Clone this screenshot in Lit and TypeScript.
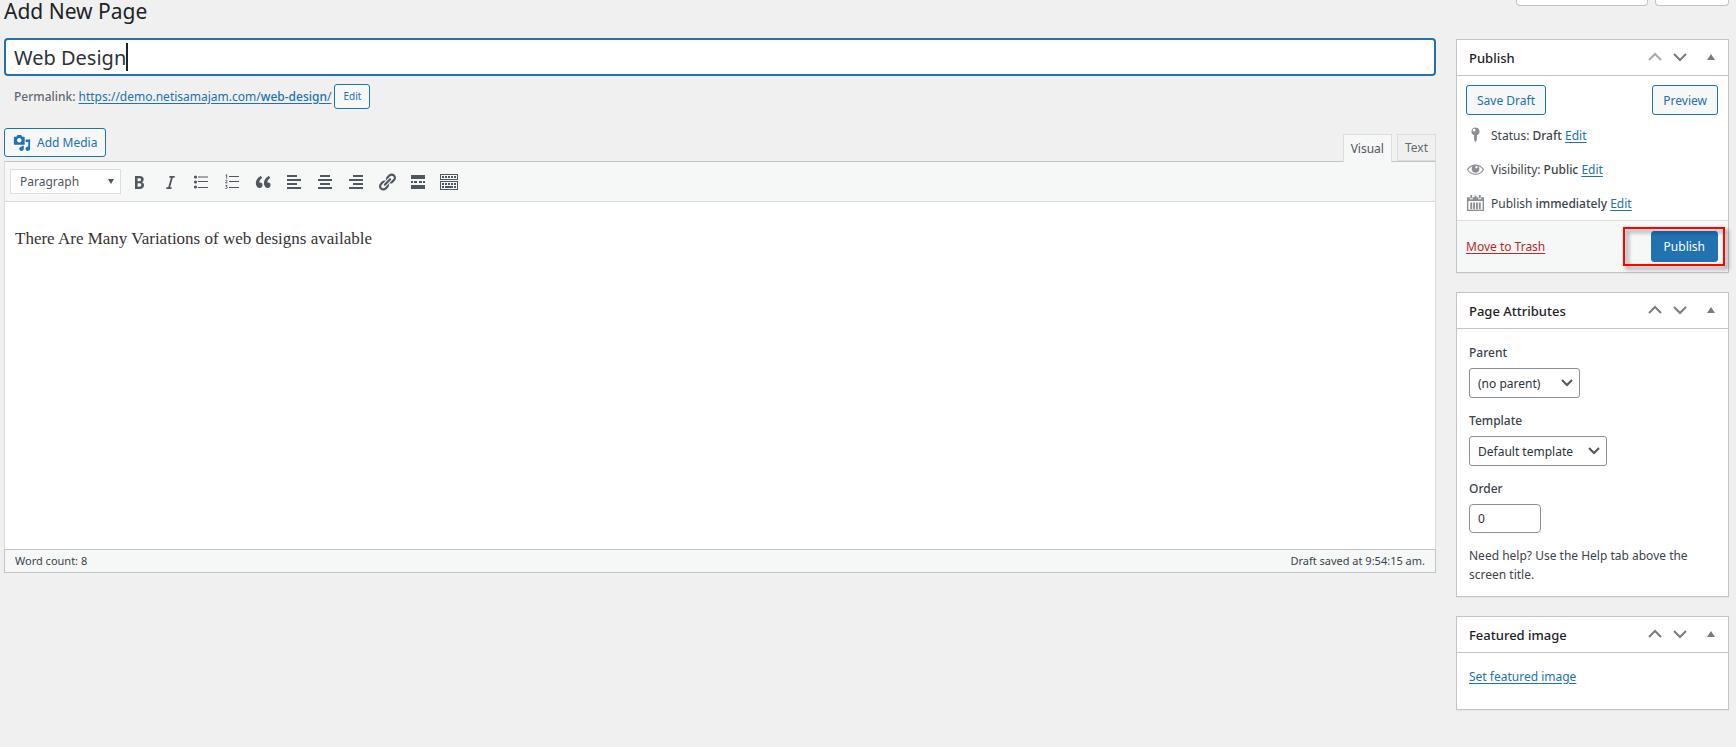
import { LitElement, html, css, svg } from "lit";
import { customElement, property } from "lit/decorators.js";

const shared = css`
  *,
  *::before,
  *::after {
    box-sizing: border-box;
  }
  a {
    color: #2271b1;
    text-decoration: underline;
    text-underline-offset: 2px;
  }
  button,
  input,
  select {
    font: inherit;
    margin: 0;
  }
  .btn {
    display: inline-flex;
    align-items: center;
    justify-content: center;
    height: 30px;
    padding: 0 10px;
    border: 1px solid #2271b1;
    border-radius: 3px;
    background: #f6f7f7;
    color: #2271b1;
    font-size: 12px;
    white-space: nowrap;
    cursor: pointer;
  }
  .icon {
    display: block;
    width: 20px;
    height: 20px;
    fill: currentColor;
    flex: none;
  }
`;

const paths = {
  media: svg`<path d="M13 11V4c0-.55-.45-1-1-1h-1.67L9 1H5L3.67 3H2c-.55 0-1 .45-1 1v7c0 .55.45 1 1 1h10c.55 0 1-.45 1-1zM7 4.5c1.38 0 2.5 1.12 2.5 2.5S8.38 9.5 7 9.5 4.5 8.38 4.5 7 5.62 4.5 7 4.5zM14 6h5v10.5c0 1.38-1.12 2.5-2.5 2.5S14 17.88 14 16.5s1.12-2.5 2.5-2.5c.17 0 .34.02.5.05V9h-3V6zm-4 8.05V13h2v3.5c0 1.38-1.12 2.5-2.5 2.5S7 17.88 7 16.5 8.12 14 9.5 14c.17 0 .34.02.5.05z"/>`,
  bold: svg`<path d="M6 4v13h4.54c1.37 0 2.46-.33 3.26-1 .8-.66 1.2-1.58 1.2-2.77 0-.84-.17-1.51-.51-2.01s-.9-.85-1.67-1.03v-.09c.57-.1 1.02-.4 1.36-.9s.51-1.13.51-1.91c0-1.14-.39-1.98-1.17-2.5C12.75 4.26 11.5 4 9.78 4H6zm2.57 5.15V6.26h1.36c.73 0 1.27.11 1.61.32.34.22.51.58.51 1.07 0 .54-.16.92-.47 1.15s-.82.35-1.51.35h-1.5zm0 2.19h1.6c1.44 0 2.16.53 2.16 1.61 0 .6-.17 1.05-.51 1.34s-.86.43-1.57.43H8.57v-3.38z"/>`,
  italic: svg`<path d="M14.9 4h-5.300l-.4 1.700h1.700L8.200 15.300H6.500L6.100 17h5.300l.4-1.700h-1.700l2.700-9.600h1.700z"/>`,
  bullets: svg`<path d="M4.5 6.600a1.600 1.600 0 1 1 0-3.200 1.600 1.600 0 0 1 0 3.200zM7 4.500h10v1H7zM4.500 11.600a1.600 1.600 0 1 1 0-3.200 1.600 1.600 0 0 1 0 3.200zM7 9h10v1H7zM4.500 16.600a1.600 1.600 0 1 1 0-3.200 1.600 1.600 0 0 1 0 3.200zM7 15h10v1H7z"/>`,
  numbers: svg`<path d="M7 4h10v1H7zM7 9h10v1H7zM7 15h10v1H7z"/><path d="M3.600 3.200l1.100-.600v4M3.400 8.600c.4-.6 1.800-.6 1.800.3 0 .7-1.200 1.200-1.800 2h2M3.500 13.400h1.600l-.9 1c1.400 0 1.400 2.200 0 2.200-.4 0-.7-.1-.9-.3" fill="none" stroke="currentColor" stroke-width=".9"/>`,
  quote: svg`<path d="M9.49 13.22c0-.74-.2-1.38-.61-1.9-.62-.78-1.83-.88-2.53-.72-.29-1.65 1.11-3.75 2.92-4.65L7.88 4c-2.73 1.3-5.42 4.28-4.96 8.05C3.21 14.43 4.59 16 6.54 16c.85 0 1.56-.25 2.12-.75s.83-1.18.83-2.03zm8.05 0c0-.74-.2-1.38-.61-1.9-.63-.78-1.83-.88-2.53-.72-.29-1.65 1.11-3.75 2.92-4.65L15.93 4c-2.73 1.3-5.41 4.28-4.95 8.05.29 2.38 1.66 3.95 3.61 3.95.85 0 1.56-.25 2.12-.75s.83-1.18.83-2.03z"/>`,
  left: svg`<path d="M3 3h10v2H3zM3 7h14v2H3zM3 11h10v2H3zM3 15h14v2H3z"/>`,
  center: svg`<path d="M5 3h10v2H5zM3 7h14v2H3zM5 11h10v2H5zM3 15h14v2H3z"/>`,
  right: svg`<path d="M7 3h10v2H7zM3 7h14v2H3zM7 11h10v2H7zM3 15h14v2H3z"/>`,
  link: svg`<path d="M17.74 2.76c1.68 1.69 1.68 4.41 0 6.1l-1.53 1.52c-1.12 1.12-2.7 1.47-4.14 1.09l2.62-2.61.76-.77.76-.76c.84-.84.84-2.2 0-3.04-.84-.85-2.2-.85-3.04 0l-.77.76-3.38 3.38c-.37-1.44-.02-3.02 1.1-4.14l1.52-1.53c1.69-1.68 4.42-1.68 6.1 0zM8.59 13.43l5.34-5.34c.42-.42.42-1.1 0-1.52-.44-.43-1.13-.39-1.53 0l-5.33 5.34c-.42.42-.42 1.1 0 1.52.44.43 1.13.39 1.52 0zm-.76 2.29l4.14-4.15c.38 1.44.03 3.02-1.09 4.14l-1.52 1.53c-1.69 1.68-4.41 1.68-6.1 0-1.68-1.68-1.68-4.42 0-6.1l1.53-1.52c1.12-1.12 2.7-1.47 4.14-1.1l-4.14 4.15c-.85.84-.85 2.2 0 3.05.84.84 2.2.84 3.04 0z"/>`,
  more: svg`<path d="M3 3h14v4H3zM3 9h2v2H3zM6 9h3v2H6zM11 9h3v2h-3zM15 9h2v2h-2zM3 13h14v4H3z"/>`,
  keyboard: svg`<path fill-rule="evenodd" d="M1 2h18v6H1zM2 3v4h16V3zM1 9h18v9H1zM2 10v7h16v-7z"/><path d="M3 4h2v2H3zM6 4h2v2H6zM9 4h2v2H9zM12 4h2v2h-2zM15 4h2v2h-2zM3 11h2v2H3zM6 11h2v2H6zM9 11h2v2H9zM12 11h2v2h-2zM15 11h2v2h-2zM3 14h2v2H3zM6 14h8v2H6zM15 14h2v2h-2z"/>`,
  pin: svg`<path fill-rule="evenodd" d="M10 2a4.3 4.3 0 0 1 1.5 8.3V15L10 18l-1.5-3v-4.7A4.3 4.3 0 0 1 10 2zM8.5 3.5a1.4 1.4 0 1 0 0 2.8 1.4 1.4 0 0 0 0-2.8z"/>`,
  eye: svg`<path d="M18.3 9.5C15 4.9 8.5 3.8 3.9 7.2c-1.2.9-2.2 2.1-3 3.4.2.4.5.8.8 1.2 3.3 4.6 9.6 5.6 14.2 2.4.9-.7 1.7-1.4 2.4-2.4.3-.4.5-.8.8-1.2-.3-.4-.5-.8-.8-1.1zm-8.2-2.3c.5-.5 1.3-.5 1.8 0s.5 1.3 0 1.8-1.3.5-1.8 0-.5-1.3 0-1.8zm-.1 7.7c-3.1 0-6-1.6-7.7-4.2C3.500 9 5.100 7.800 7 7.200c-.7.8-1 1.700-1 2.700 0 2.200 1.700 4.100 4 4.100 2.200 0 4.100-1.700 4.100-4v-.1c0-1-.4-2-1.1-2.700 1.900.6 3.500 1.800 4.700 3.500-1.700 2.600-4.600 4.200-7.700 4.200z"/>`,
  calendar: svg`<path fill-rule="evenodd" d="M1 4h3v2h3V4h6v2h3V4h3v14.500H1zM2.500 8v9h15V8z"/><path d="M4.500 1.500h2V5h-2zM9 2h2v3H9zM13.500 1.500h2V5h-2zM4.500 9.500h2v7h-2zM7.500 9.500h2v7h-2zM10.500 9.500h2v7h-2zM13.500 9.500h2v7h-2z"/>`,
};

const icon = (name: keyof typeof paths) =>
  html`<svg class="icon" viewBox="0 0 20 20" aria-hidden="true">${paths[name]}</svg>`;

@customElement("post-box")
class PostBox extends LitElement {
  @property() heading = "";
  @property({ type: Boolean }) first = false;

  static styles = [
    shared,
    css`
      :host {
        display: block;
        border: 1px solid #c3c4c7;
        background: #fff;
        box-shadow: 0 1px 1px rgba(0, 0, 0, 0.04);
      }
      .head {
        display: flex;
        align-items: center;
        height: 36px;
        padding: 0 9px 0 12px;
        border-bottom: 1px solid #c3c4c7;
      }
      .title {
        flex: 1;
        margin: 0;
        color: #1d2327;
        font-size: 13px;
        font-weight: 500;
        line-height: 18px;
      }
      .handle {
        display: grid;
        place-items: center;
        width: 25px;
        height: 34px;
        padding: 0 0 2px;
        border: 0;
        background: none;
        color: #787c82;
      }
      .handle:disabled {
        color: #a7aaad;
      }
      .toggle {
        width: 16px;
        margin-left: 11px;
      }
      .chevron {
        width: 14px;
        height: 10px;
        fill: none;
        stroke: currentColor;
        stroke-width: 2;
      }
      .triangle {
        width: 8px;
        height: 6px;
        fill: currentColor;
      }
    `,
  ];

  render() {
    return html`
      <div class="head">
        <h2 class="title">${this.heading}</h2>
        <button class="handle" aria-label="Move up" ?disabled=${this.first}>
          <svg class="chevron" viewBox="0 0 14 10"><path d="M1 8l6-6 6 6" /></svg>
        </button>
        <button class="handle" aria-label="Move down">
          <svg class="chevron" viewBox="0 0 14 10"><path d="M1 2l6 6 6-6" /></svg>
        </button>
        <button class="handle toggle" aria-label="Toggle panel">
          <svg class="triangle" viewBox="0 0 8 6"><path d="M4 0l4 6H0z" /></svg>
        </button>
      </div>
      <slot></slot>
    `;
  }
}

const tools: [keyof typeof paths, string][] = [
  ["bold", "Bold"],
  ["italic", "Italic"],
  ["bullets", "Bulleted list"],
  ["numbers", "Numbered list"],
  ["quote", "Blockquote"],
  ["left", "Align left"],
  ["center", "Align center"],
  ["right", "Align right"],
  ["link", "Insert link"],
  ["more", "Insert Read More tag"],
  ["keyboard", "Toolbar Toggle"],
];

@customElement("app-root")
class AppRoot extends LitElement {
  static styles = [
    shared,
    css`
      :host {
        display: block;
        min-height: 100vh;
        padding: 0 7px 24px 4px;
        background: #f0f0f1;
        color: #3c434a;
        font-family: "Noto Sans", "Open Sans", sans-serif;
        font-size: 12px;
        line-height: 19px;
      }
      .top {
        display: flex;
        justify-content: space-between;
        height: 39px;
      }
      h1 {
        margin: 0;
        color: #1d2327;
        font-size: 21px;
        font-weight: 400;
        line-height: 22px;
      }
      .meta {
        display: flex;
        gap: 7px;
      }
      .tab-stub {
        width: 74px;
        height: 6px;
        padding: 0;
        border: 1px solid #c3c4c7;
        border-top: 0;
        border-radius: 0 0 4px 4px;
        background: #fff;
      }
      .wide {
        width: 132px;
      }
      .columns {
        display: grid;
        grid-template-columns: minmax(0, 1fr) 273px;
        gap: 20px;
        align-items: start;
      }
      .title-field {
        display: flex;
        align-items: center;
        height: 38px;
        margin-top: -1px;
        padding: 0 8px;
        border: 2px solid #2271b1;
        border-radius: 4px;
        background: #fff;
        cursor: text;
      }
      .title-input {
        field-sizing: content;
        min-width: 1px;
        padding: 1px 0 0;
        border: 0;
        outline: 0;
        background: none;
        color: #2c3338;
        caret-color: transparent;
        font-size: 20px;
        line-height: 30px;
      }
      .caret {
        width: 2px;
        height: 28px;
        background: #1d2327;
      }
      .permalink {
        display: flex;
        align-items: center;
        gap: 3px;
        height: 40px;
        padding: 0 10px;
      }
      .permalink strong {
        color: #646970;
        font-weight: 500;
      }
      .permalink b {
        font-weight: 500;
      }
      .small {
        height: 25px;
        padding: 0 8px;
        font-size: 10px;
      }
      .editor-tools {
        display: flex;
        justify-content: space-between;
        margin-top: 12px;
      }
      .media-btn {
        gap: 6px;
        height: 29px;
        padding: 0 8px;
      }
      .media-btn .icon {
        width: 18px;
        height: 18px;
      }
      .tabs {
        display: flex;
        align-items: flex-end;
        gap: 5px;
      }
      .tab {
        height: 27px;
        margin-top: 6px;
        padding: 0 7px;
        border: 1px solid #dcdcde;
        background: #f0f0f1;
        color: #646970;
        line-height: 24px;
      }
      .tab.active {
        position: relative;
        height: 28px;
        margin-bottom: -1px;
        border-bottom: 0;
        background: #f6f7f7;
        color: #50575e;
      }
      .editor {
        border: 1px solid #dcdcde;
        border-top-color: #c3c4c7;
        background: #fff;
      }
      .toolbar {
        display: flex;
        align-items: center;
        height: 40px;
        padding: 0 5px;
        border-bottom: 1px solid #dcdcde;
        background: #f6f7f7;
      }
      .tools {
        display: flex;
        gap: 3px;
        padding-left: 4px;
      }
      .tool {
        display: grid;
        place-items: center;
        width: 28px;
        height: 28px;
        padding: 0;
        border: 0;
        background: none;
        color: #50575e;
      }
      .pick {
        display: inline-grid;
        align-items: center;
      }
      .pick select,
      .pick svg {
        grid-area: 1 / 1;
      }
      .pick svg {
        justify-self: end;
        pointer-events: none;
      }
      .pick select {
        appearance: none;
        height: 30px;
        padding: 0 24px 0 8px;
        border: 1px solid #8c8f94;
        border-radius: 3px;
        background: #fff;
        color: #2c3338;
        font-size: 12px;
      }
      .pick .format {
        width: 111px;
        height: 25px;
        padding: 0 20px 0 9px;
        border-color: #dcdcde;
        border-radius: 0;
        color: #50575e;
      }
      .arrow {
        width: 6px;
        height: 5px;
        margin-right: 7px;
        fill: #50575e;
      }
      .chev {
        width: 12px;
        height: 8px;
        margin-right: 7px;
        fill: none;
        stroke: #50575e;
        stroke-width: 2;
      }
      .parent {
        width: 111px;
      }
      .template {
        width: 138px;
      }
      .content {
        min-height: 347px;
        padding: 24px 10px;
        color: #333;
        font-family: Georgia, "Liberation Serif", serif;
        font-size: 17px;
        line-height: 26px;
      }
      .content p {
        margin: 0;
      }
      .status {
        display: flex;
        justify-content: space-between;
        height: 24px;
        margin: 0 -1px -1px;
        padding: 0 10px;
        border: 1px solid #c3c4c7;
        background: #f6f7f7;
        font-size: 11px;
        line-height: 21px;
      }
      .side {
        display: grid;
        gap: 19px;
      }
      .minor {
        padding: 9px 10px 0 9px;
      }
      .actions {
        display: flex;
        justify-content: space-between;
        margin-bottom: 3px;
      }
      .row {
        display: flex;
        align-items: center;
        gap: 6px;
        height: 34px;
      }
      .row .icon {
        color: #8c8f94;
        width: 19px;
      }
      .row strong {
        font-weight: 500;
      }
      .major {
        display: flex;
        align-items: center;
        justify-content: space-between;
        height: 52px;
        padding: 0 10px 0 9px;
        border-top: 1px solid #dcdcde;
        background: #f6f7f7;
      }
      .trash {
        color: #b32d2e;
      }
      .spot {
        position: relative;
      }
      .primary {
        height: 31px;
        padding: 0 12px;
        background: #2271b1;
        color: #fff;
      }
      .marker {
        position: absolute;
        inset: -4px -7px -4px -28px;
        border: 2px solid #f00;
        filter: drop-shadow(3px 3px 2px rgba(0, 0, 0, 0.5));
        pointer-events: none;
      }
      .fields {
        display: grid;
        justify-items: start;
        padding: 14px 12px 12px;
      }
      .field {
        display: grid;
        justify-items: start;
        gap: 6px;
        margin-bottom: 13px;
      }
      .field label {
        font-weight: 500;
      }
      .order {
        width: 72px;
        height: 29px;
        padding: 0 8px;
        border: 1px solid #8c8f94;
        border-radius: 4px;
        background: #fff;
        color: #2c3338;
      }
      .help {
        margin: 0;
      }
      .featured {
        padding: 14px 12px 23px;
      }
    `,
  ];

  chevron() {
    return html`<svg class="chev" viewBox="0 0 12 8"><path d="M1 1l5 5 5-5" /></svg>`;
  }

  row(name: keyof typeof paths, label: string, value: string) {
    return html`<div class="row">
      ${icon(name)}<span>${label} <strong>${value}</strong> <a href="#">Edit</a></span>
    </div>`;
  }

  render() {
    return html`
      <header class="top">
        <h1>Add New Page</h1>
        <div class="meta">
          <button class="tab-stub wide" aria-label="Screen Options"></button>
          <button class="tab-stub" aria-label="Help"></button>
        </div>
      </header>
      <div class="columns">
        <main>
          <label class="title-field">
            <input class="title-input" aria-label="Title" value="Web Design" /><span class="caret"></span>
          </label>
          <div class="permalink">
            <strong>Permalink:</strong>
            <a href="#">https://demo.netisamajam.com/<b>web-design</b>/</a>
            <button class="btn small">Edit</button>
          </div>
          <div class="editor-tools">
            <button class="btn media-btn">${icon("media")}Add Media</button>
            <div class="tabs">
              <button class="tab active">Visual</button>
              <button class="tab">Text</button>
            </div>
          </div>
          <section class="editor">
            <div class="toolbar">
              <span class="pick">
                <select class="format" aria-label="Format"><option>Paragraph</option></select>
                <svg class="arrow" viewBox="0 0 6 5"><path d="M0 0h6L3 5z" /></svg>
              </span>
              <div class="tools">
                ${tools.map(
                  ([name, label]) => html`<button class="tool" aria-label=${label}>${icon(name)}</button>`
                )}
              </div>
            </div>
            <div class="content"><p>There Are Many Variations of web designs available</p></div>
            <div class="status">
              <span>Word count: 8</span><span>Draft saved at 9:54:15 am.</span>
            </div>
          </section>
        </main>
        <aside class="side">
          <post-box heading="Publish" first>
            <div class="minor">
              <div class="actions">
                <button class="btn">Save Draft</button>
                <button class="btn">Preview</button>
              </div>
              ${this.row("pin", "Status:", "Draft")}
              ${this.row("eye", "Visibility:", "Public")}
              ${this.row("calendar", "Publish", "immediately")}
            </div>
            <div class="major">
              <a class="trash" href="#">Move to Trash</a>
              <div class="spot">
                <button class="btn primary">Publish</button>
                <span class="marker"></span>
              </div>
            </div>
          </post-box>
          <post-box heading="Page Attributes">
            <div class="fields">
              <div class="field">
                <label for="parent">Parent</label>
                <span class="pick">
                  <select id="parent" class="parent"><option>(no parent)</option></select>${this.chevron()}
                </span>
              </div>
              <div class="field">
                <label for="template">Template</label>
                <span class="pick">
                  <select id="template" class="template"><option>Default template</option></select>${this.chevron()}
                </span>
              </div>
              <div class="field">
                <label for="order">Order</label>
                <input id="order" class="order" value="0" />
              </div>
              <p class="help">Need help? Use the Help tab above the screen title.</p>
            </div>
          </post-box>
          <post-box heading="Featured image">
            <div class="featured"><a href="#">Set featured image</a></div>
          </post-box>
        </aside>
      </div>
    `;
  }
}
